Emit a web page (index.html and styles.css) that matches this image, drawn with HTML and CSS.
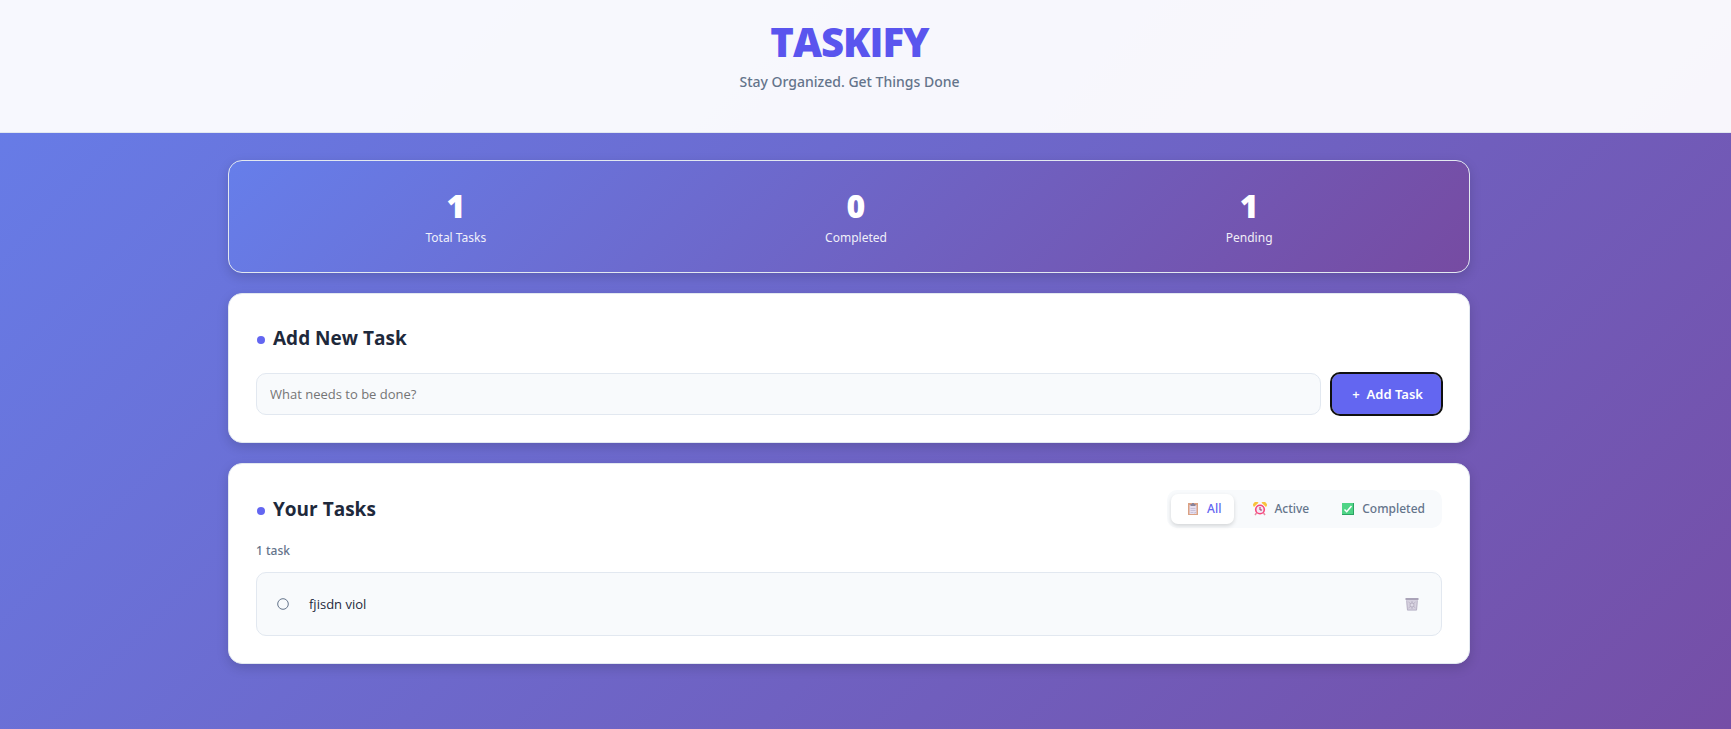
FILE: index.html
```html
<!DOCTYPE html>
<html lang="en">
<head>
<meta charset="utf-8">
<title>Taskify</title>
<link rel="stylesheet" href="styles.css">
</head>
<body>
<header class="header">
  <h1 class="logo">TASKIFY</h1>
  <p class="tagline">Stay Organized. Get Things Done</p>
</header>
<main class="container">
  <section class="stats" aria-label="Statistics">
    <div class="stat"><span class="stat-number">1</span><span class="stat-label">Total Tasks</span></div>
    <div class="stat"><span class="stat-number">0</span><span class="stat-label">Completed</span></div>
    <div class="stat"><span class="stat-number">1</span><span class="stat-label">Pending</span></div>
  </section>

  <section class="card">
    <h2 class="title">Add New Task</h2>
    <form class="task-form">
      <input class="task-input" type="text" placeholder="What needs to be done?" aria-label="New task">
      <button class="add-button" type="button"><span>+</span><span>Add Task</span></button>
    </form>
  </section>

  <section class="card">
    <div class="card-head">
      <h2 class="title">Your Tasks</h2>
      <div class="filters">
        <button class="filter active" type="button">
          <svg class="icon" viewBox="0 0 14 14" aria-hidden="true">
            <path fill="#dba183" d="M2 1h10v12H2z"/>
            <path fill="#e5dff0" d="M3.500 3h7v9h-7z"/>
            <path fill="#8a8399" d="M4.500 2h1.500V1h2v1h1.500v2h-5z"/>
            <path stroke="#c9c1d8" d="M4.500 6.500h5M4.500 8.500h5M4.500 10.500h3"/>
            <path fill="#c3bbd0" d="M8.500 12v-2h2z"/>
          </svg>
          <span>All</span>
        </button>
        <button class="filter" type="button">
          <svg class="icon" viewBox="0 0 14 14" aria-hidden="true">
            <path stroke="#e58aa0" stroke-width="1.500" d="M3.500 11 2 13M10.500 11l1.500 2"/>
            <path fill="#f9c23c" d="M1 5a3 3 0 0 1 4.500-4.200zM13 5A3 3 0 0 0 8.500.800z"/>
            <circle cx="7" cy="7.500" r="4.300" fill="#f1e8f6" stroke="#f8467d" stroke-width="1.600"/>
            <path fill="none" stroke="#a0345c" d="M7 5v3h2"/>
          </svg>
          <span>Active</span>
        </button>
        <button class="filter" type="button">
          <svg class="icon" viewBox="0 0 14 14" aria-hidden="true">
            <path fill="#4fd486" d="M1 1h12v12H1z"/>
            <path fill="#2ba363" d="M12 1h1v12H1v-1h11z"/>
            <path fill="none" stroke="#fff" stroke-width="1.500" d="m3.500 7.500 2.200 2.200L10.500 4"/>
          </svg>
          <span>Completed</span>
        </button>
      </div>
    </div>
    <p class="count">1 task</p>
    <ul class="task-list">
      <li class="task">
        <button class="icon-button" type="button" aria-label="Mark as done">
          <svg class="icon" viewBox="0 0 14 14" aria-hidden="true"><circle cx="7" cy="7" r="5.300" fill="none" stroke="#64748b"/></svg>
        </button>
        <span class="task-text">fjisdn viol</span>
        <button class="icon-button" type="button" aria-label="Delete task">
          <svg class="icon" viewBox="0 0 14 14" aria-hidden="true">
            <path fill="#d6d1df" d="M1.200 2.500h11.600l-.8 11H2z"/>
            <path fill="#aaa3b8" d="M.5 1h13v2H.5z"/>
            <path fill="none" stroke="#b3acc0" stroke-width=".8" d="M1.700 3.500 2.500 13h9l.8-9.500M3.500 5l7 6M10.500 5l-7 6M7 4v8"/>
            <circle cx="7" cy="8" r="2" fill="#dedae6" stroke="#aaa3b8" stroke-width=".7"/>
          </svg>
        </button>
      </li>
    </ul>
  </section>
</main>
</body>
</html>
```
FILE: styles.css
```css
* {
  box-sizing: border-box;
  margin: 0;
  padding: 0;
}

body {
  min-height: 100vh;
  font-family: "Noto Sans", "Open Sans", sans-serif;
  line-height: 24px;
  color: #1e293b;
  background: linear-gradient(135deg, #667eea 0%, #764ba2 106%);
}

button,
input {
  font: inherit;
}

button {
  border: 0;
  background: none;
  cursor: pointer;
}

.header {
  padding: 20px 32px 38px 0;
  text-align: center;
  background: rgba(255, 255, 255, 0.95);
  border-bottom: 1px solid #e2e8f0;
}

.logo {
  font-family: "Open Sans", "Noto Sans", sans-serif;
  font-size: 40px;
  font-weight: 800;
  line-height: 44px;
  letter-spacing: -1px;
  color: #5a55ee;
}

.tagline {
  margin-top: 6px;
  font-size: 14px;
  font-weight: 500;
  color: #64748b;
}

.container {
  display: flex;
  flex-direction: column;
  gap: 20px;
  padding: 27px 261px 40px 228px;
}

.stats {
  display: flex;
  justify-content: space-around;
  padding: 27px 27px 24px;
  color: #fff;
  text-align: center;
  background: linear-gradient(135deg, #667eea 0%, #764ba2 100%);
  border: 1px solid #e2e8f0;
  border-radius: 14px;
  box-shadow: 0 4px 12px rgba(0, 0, 0, 0.15);
}

.stat {
  display: flex;
  flex-direction: column;
  gap: 4px;
}

.stat-number {
  font-family: "Open Sans", "Noto Sans", sans-serif;
  font-size: 32px;
  font-weight: 800;
  line-height: 36px;
}

.stat-label {
  font-size: 12px;
  line-height: 20px;
  opacity: 0.9;
}

.card {
  padding: 26px 27px 27px;
  background: #fff;
  border: 1px solid #e2e8f0;
  border-radius: 14px;
  box-shadow: 0 4px 12px rgba(0, 0, 0, 0.15);
}

.title {
  display: flex;
  align-items: center;
  gap: 8px;
  font-family: "Open Sans", "Noto Sans", sans-serif;
  font-size: 19px;
  font-weight: 700;
  line-height: 36px;
}

.title::before {
  content: "";
  width: 8px;
  height: 8px;
  margin: 4px 0 0 1px;
  border-radius: 50%;
  background: #6366f1;
}

.task-form {
  display: flex;
  gap: 10px;
  margin-top: 17px;
}

.task-input {
  flex: 1;
  min-width: 0;
  height: 42px;
  padding: 0 13px;
  font-family: "Open Sans", "Noto Sans", sans-serif;
  font-size: 13px;
  color: #1e293b;
  background: #f8fafc;
  border: 1px solid #e2e8f0;
  border-radius: 10px;
}

.task-input::placeholder {
  color: #757575;
}

.add-button {
  display: flex;
  align-items: center;
  gap: 7px;
  height: 40px;
  margin: 1px;
  padding: 0 18px 0 20px;
  font-size: 13px;
  font-weight: 600;
  color: #fff;
  background: #6366f1;
  border-radius: 8px;
  outline: 2px solid #101010;
}

.card-head {
  display: flex;
  align-items: center;
  justify-content: space-between;
}

.filters {
  display: flex;
  gap: 4px;
  padding: 4px;
  background: #f8fafc;
  border-radius: 10px;
}

.filter {
  display: flex;
  align-items: center;
  gap: 7px;
  height: 30px;
  padding: 0 13px 0 15px;
  font-size: 12px;
  font-weight: 500;
  color: #64748b;
  border-radius: 7px;
}

.filter.active {
  color: #6366f1;
  background: #fff;
  box-shadow: 0 2px 4px rgba(0, 0, 0, 0.15);
}

.icon {
  display: block;
  width: 14px;
  height: 14px;
}

.count {
  margin: 13px 0 11px;
  font-size: 12px;
  font-weight: 500;
  line-height: 20px;
  color: #64748b;
}

.task-list {
  list-style: none;
}

.task {
  display: flex;
  align-items: center;
  gap: 13px;
  min-height: 64px;
  padding: 12px 16px 12px 13px;
  background: #f8fafc;
  border: 1px solid #e2e8f0;
  border-radius: 10px;
}

.icon-button {
  padding: 6px;
}

.task-text {
  flex: 1;
  font-family: "Open Sans", "Noto Sans", sans-serif;
  font-size: 13px;
}
```
